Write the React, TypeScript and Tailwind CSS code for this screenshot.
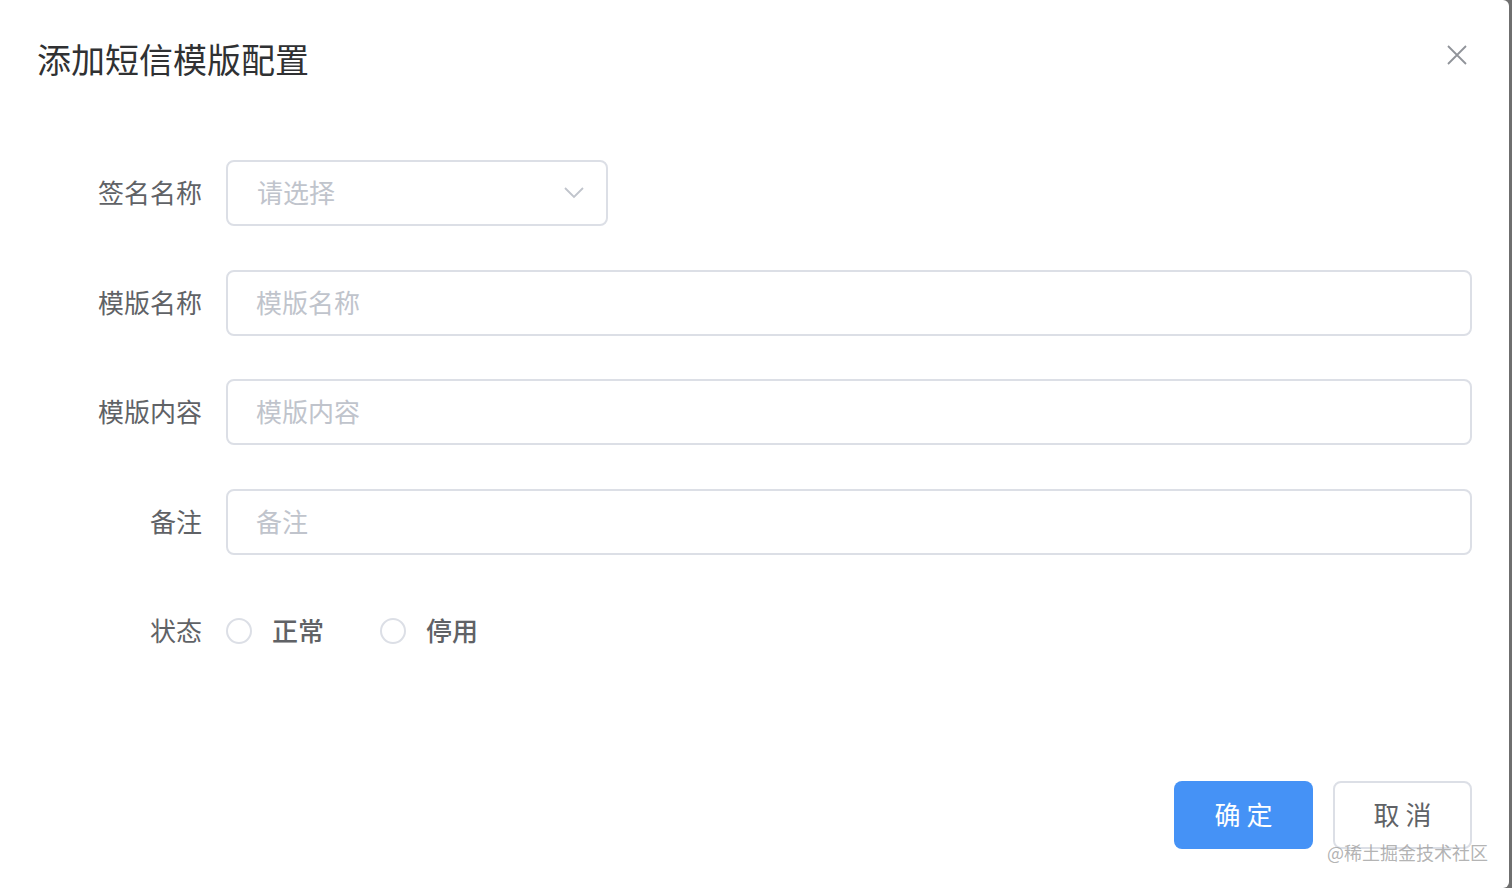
import React, { useState } from "react";

const font = {
  fontFamily: '"Noto Sans CJK SC", "Noto Sans", sans-serif',
};

function Field({ label, children }: { label: string; children: React.ReactNode }) {
  return (
    <div className="flex h-[66px] items-center">
      <label className="w-[189px] shrink-0 pb-[3px] pr-[24px] text-right text-[26px] text-[#606266]">
        {label}
      </label>
      {children}
    </div>
  );
}

function TextInput({ placeholder }: { placeholder: string }) {
  return (
    <input
      placeholder={placeholder}
      className="h-[66px] w-full rounded-[8px] border-2 border-[#dcdfe6] px-[28px] pb-[3px] text-[26px] text-[#606266] outline-none placeholder:text-[#c0c4cc]"
    />
  );
}

function Radio({ label, checked, onClick }: { label: string; checked: boolean; onClick: () => void }) {
  return (
    <button type="button" onClick={onClick} className="flex items-center">
      <span
        className={
          checked
            ? "flex h-[26px] w-[26px] items-center justify-center rounded-full border-2 border-[#409eff] bg-[#409eff]"
            : "flex h-[26px] w-[26px] items-center justify-center rounded-full border-2 border-[#dcdfe6] bg-white"
        }
      >
        {checked ? <span className="h-[8px] w-[8px] rounded-full bg-white" /> : null}
      </span>
      <span className="ml-[20px] pb-[3px] text-[26px] font-medium text-[#606266]">{label}</span>
    </button>
  );
}

export default function App() {
  const [status, setStatus] = useState<string | null>(null);

  return (
    <div className="flex h-[888px] w-[1512px] bg-[#6f6f6f]" style={font}>
      <div className="relative h-full w-[1509px] rounded-tr-[6px] rounded-br-[6px] bg-white px-[37px]">
        <div className="flex items-start justify-between pt-[39px]">
          <h1 className="text-[34px] leading-[40px] text-[#303133]">添加短信模版配置</h1>
          <button type="button" className="mr-[4px] mt-[5px] text-[#909399]" aria-label="关闭">
            <svg width="22" height="22" viewBox="0 0 22 22" fill="none" stroke="currentColor" strokeWidth="1.8">
              <path d="M2 2 L20 20 M20 2 L2 20" />
            </svg>
          </button>
        </div>

        <form className="mt-[81px] flex flex-col gap-[43.5px]">
          <Field label="签名名称">
            <div className="flex h-[66px] w-[382px] items-center justify-between rounded-[8px] border-2 border-[#dcdfe6] pl-[29px] pr-[22px]">
              <span className="pb-[3px] text-[26px] text-[#c0c4cc]">请选择</span>
              <svg width="20" height="12" viewBox="0 0 20 12" fill="none" stroke="#c0c4cc" strokeWidth="1.8">
                <path d="M1 1 L10 10 L19 1" />
              </svg>
            </div>
          </Field>
          <Field label="模版名称">
            <TextInput placeholder="模版名称" />
          </Field>
          <Field label="模版内容">
            <TextInput placeholder="模版内容" />
          </Field>
          <Field label="备注">
            <TextInput placeholder="备注" />
          </Field>
          <Field label="状态">
            <div className="flex items-center gap-[56px]">
              <Radio label="正常" checked={status === "on"} onClick={() => setStatus("on")} />
              <Radio label="停用" checked={status === "off"} onClick={() => setStatus("off")} />
            </div>
          </Field>
        </form>

        <div className="mt-[117px] flex justify-end gap-[20px]">
          <button
            type="button"
            className="h-[68px] w-[139px] rounded-[8px] bg-[#4592f6] pb-[3px] text-[26px] text-white"
          >
            确 定
          </button>
          <button
            type="button"
            className="h-[68px] w-[139px] rounded-[8px] border-2 border-[#dcdfe6] bg-white pb-[3px] text-[26px] text-[#606266]"
          >
            取 消
          </button>
        </div>

        <div className="pointer-events-none absolute right-[21px] top-[840px] text-[18px] leading-[24px] text-[#a0a0a0]/80">
          @稀土掘金技术社区
        </div>
      </div>
    </div>
  );
}
